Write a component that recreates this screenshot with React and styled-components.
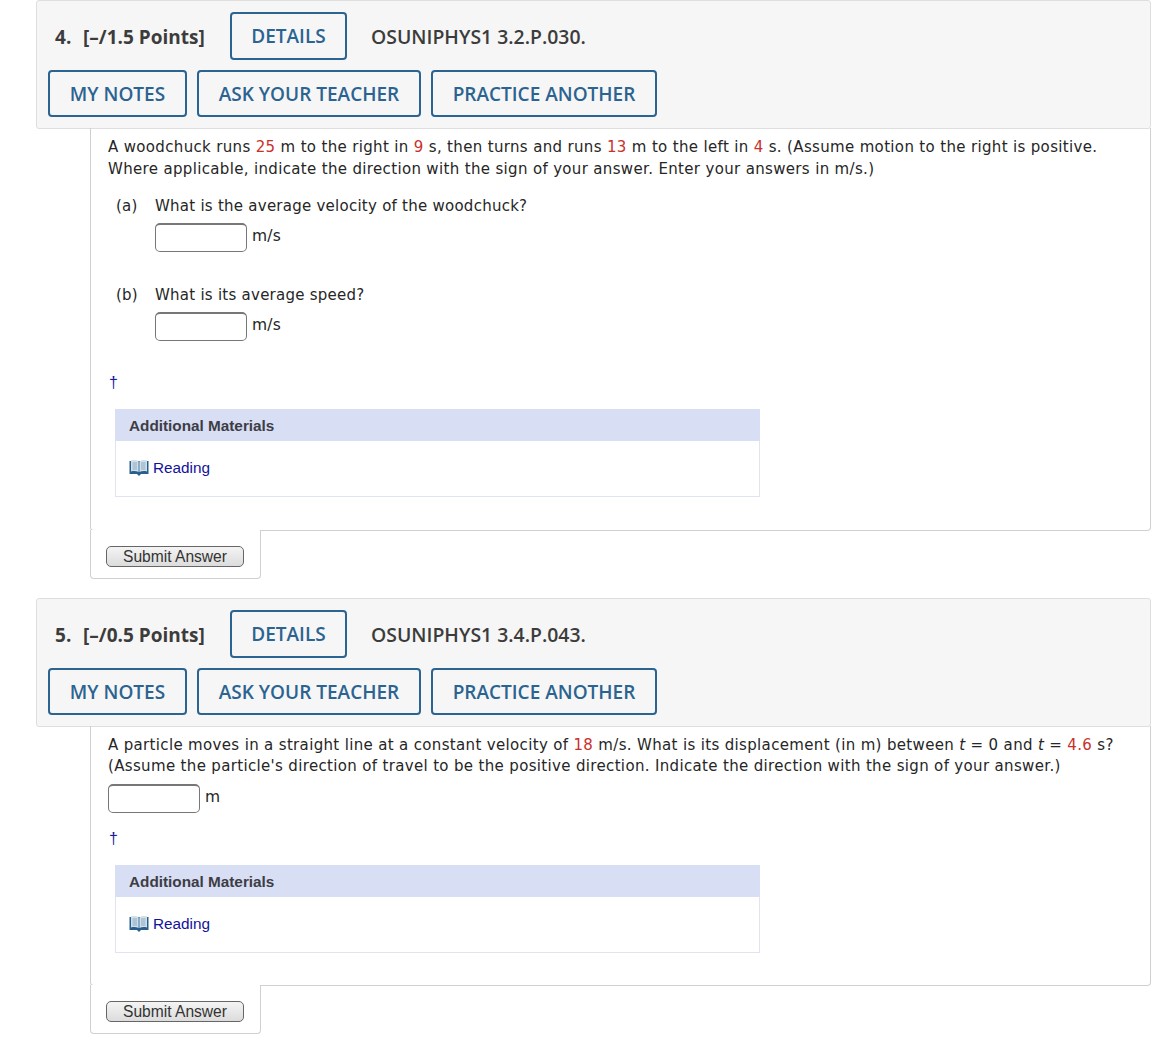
import React from 'react';
import styled, { createGlobalStyle } from 'styled-components';

const GlobalStyle = createGlobalStyle`
  html, body {
    margin: 0;
    padding: 0;
    background: #fff;
  }
`;

const Page = styled.div`
  width: 1170px;
  height: 1039px;
  padding-left: 36px;
  box-sizing: border-box;
  overflow: hidden;
`;

const Question = styled.section`
  width: 1115px;
  margin-bottom: ${(p) => p.$gap || 0}px;
`;

const Header = styled.header`
  height: 129px;
  box-sizing: border-box;
  background: #f6f6f6;
  border: 1px solid #dedede;
  border-radius: 3px;
  padding: 11px 0 0 11px;
`;

const HeaderRow = styled.div`
  display: flex;
  align-items: center;
  margin-bottom: 10px;
`;

const Points = styled.div`
  display: flex;
  width: 182px;
  padding: 2px 0 0 7px;
  box-sizing: border-box;
  font: 700 19px 'Open Sans', sans-serif;
  color: #3c3c3c;
`;

const Num = styled.span`
  width: 28px;
`;

const Code = styled.span`
  margin-left: 24px;
  font: 600 19.4px 'Open Sans', sans-serif;
  color: #3c3c3c;
`;

const HeadButton = styled.button`
  height: ${(p) => p.$h || 48}px;
  box-sizing: border-box;
  width: ${(p) => p.$w}px;
  margin-right: ${(p) => p.$mr || 0}px;
  padding: 0;
  background: transparent;
  border: 2px solid #2b6391;
  border-radius: 4px;
  color: #2b6391;
  font: 600 19px 'Open Sans', sans-serif;
`;

const Body = styled.div`
  margin-left: 54px;
  margin-top: -1px;
  height: ${(p) => p.$h}px;
  box-sizing: border-box;
  border: 1px solid #d0d0d0;
  border-top: 0;
  border-radius: 0 0 4px 4px;
  padding: 8px 0 0 17px;
  font: 15px/22px 'DejaVu Sans', Verdana, sans-serif;
  letter-spacing: 0.25px;
  color: #262626;
`;

const Red = styled.span`
  color: #c8312b;
`;

const Prompt = styled.p`
  margin: ${(p) => p.$top || 0}px 0 0;
  white-space: nowrap;
  letter-spacing: 0.34px;
  line-height: ${(p) => p.$lh || 22}px;
`;

const Part = styled.div`
  display: flex;
  margin: ${(p) => p.$top}px 0 0 8px;
`;

const PartLabel = styled.span`
  width: 39px;
`;

const AnswerRow = styled.div`
  display: flex;
  align-items: flex-start;
  margin: ${(p) => p.$top}px 0 0 ${(p) => p.$left}px;
`;

const AnswerBox = styled.input`
  width: 92px;
  height: 29px;
  box-sizing: border-box;
  margin: 0 5px 0 0;
  padding: 0;
  border: 1px solid #777;
  border-top-width: 2px;
  border-radius: 5px;
  background: #fff;
`;

const Unit = styled.span`
  font-size: 15.5px;
  line-height: 26px;
`;

const Dagger = styled.div`
  margin: ${(p) => p.$top}px 0 0 1px;
  color: #1a1a9c;
  font: 16px/20px 'Liberation Sans', Arial, sans-serif;
`;

const Materials = styled.div`
  width: 645px;
  height: 88px;
  box-sizing: border-box;
  margin: 16px 0 0 7px;
  border: 1px solid #dfe3f2;
  border-top: 0;
  letter-spacing: normal;
`;

const MaterialsTitle = styled.div`
  height: 32px;
  margin: 0 -1px;
  padding-left: 14px;
  background: #d8def3;
  font: 700 15.3px/33px 'Liberation Sans', Arial, sans-serif;
  color: #3d3d46;
`;

const ReadingLink = styled.a`
  display: flex;
  align-items: center;
  gap: 4px;
  margin: 17px 0 0 13px;
  font: 15.3px/20px 'Liberation Sans', Arial, sans-serif;
  color: #12129c;
`;

const SubmitTab = styled.div`
  position: relative;
  width: 171px;
  height: 49px;
  box-sizing: border-box;
  margin: -1px 0 0 54px;
  padding: 16px 0 0 15px;
  background: #fff;
  border: 1px solid #d0d0d0;
  border-top: 0;
  border-radius: 0 0 4px 4px;
`;

const SubmitButton = styled.button`
  display: block;
  width: 138px;
  height: 21px;
  box-sizing: border-box;
  padding: 0;
  border: 1px solid #666;
  border-radius: 5px;
  background: linear-gradient(#f4f4f4, #dcdcdc);
  color: #333;
  font: 15.6px 'Liberation Sans', Arial, sans-serif;
`;

const BookIcon = () => (
  <svg width="20" height="18" viewBox="0 0 20 18">
    <path d="M0.5 2h19v13H12l-2 2-2-2H0.5z" fill="#2a5f8c" />
    <path d="M2 1.5C5 .8 7.8 1 9.6 2.4V13C7.5 12 5 11.8 2 12.4z" fill="#cfe0ec" />
    <path d="M18 1.5C15 .8 12.2 1 10.4 2.4V13c2.1-1 4.6-1.2 7.6-.6z" fill="#cfe0ec" />
    <path d="M3.5 4h4.5M3.5 6h4.5M3.5 8h4.5M3.5 10h4.5M12 4h4.5M12 6h4.5M12 8h4.5M12 10h4.5" stroke="#8fa9bd" strokeWidth="1" />
  </svg>
);

function QuestionHeader({ num, points, code }) {
  return (
    <Header>
      <HeaderRow>
        <Points>
          <Num>{num}.</Num>
          <span>[–/{points} Points]</span>
        </Points>
        <HeadButton $w={117}>DETAILS</HeadButton>
        <Code>{code}</Code>
      </HeaderRow>
      <HeaderRow>
        <HeadButton $w={139} $h={47} $mr={10}>MY NOTES</HeadButton>
        <HeadButton $w={224} $h={47} $mr={10}>ASK YOUR TEACHER</HeadButton>
        <HeadButton $w={226} $h={47}>PRACTICE ANOTHER</HeadButton>
      </HeaderRow>
    </Header>
  );
}

function AdditionalMaterials() {
  return (
    <Materials>
      <MaterialsTitle>Additional Materials</MaterialsTitle>
      <ReadingLink>
        <BookIcon />
        Reading
      </ReadingLink>
    </Materials>
  );
}

function Submit() {
  return (
    <SubmitTab>
      <SubmitButton>Submit Answer</SubmitButton>
    </SubmitTab>
  );
}

export default function App() {
  return (
    <Page>
      <GlobalStyle />
      <Question $gap={19}>
        <QuestionHeader num={4} points="1.5" code="OSUNIPHYS1 3.2.P.030." />
        <Body $h={403}>
          <Prompt>
            A woodchuck runs <Red>25</Red> m to the right in <Red>9</Red> s, then turns and runs <Red>13</Red> m to the left in <Red>4</Red> s. (Assume motion to the right is positive.
            <br />
            Where applicable, indicate the direction with the sign of your answer. Enter your answers in m/s.)
          </Prompt>
          <Part $top={15}>
            <PartLabel>(a)</PartLabel>
            <span>What is the average velocity of the woodchuck?</span>
          </Part>
          <AnswerRow $top={6} $left={47}>
            <AnswerBox />
            <Unit>m/s</Unit>
          </AnswerRow>
          <Part $top={32}>
            <PartLabel>(b)</PartLabel>
            <span>What is its average speed?</span>
          </Part>
          <AnswerRow $top={6} $left={47}>
            <AnswerBox />
            <Unit>m/s</Unit>
          </AnswerRow>
          <Dagger $top={32}>†</Dagger>
          <AdditionalMaterials />
        </Body>
        <Submit />
      </Question>
      <Question>
        <QuestionHeader num={5} points="0.5" code="OSUNIPHYS1 3.4.P.043." />
        <Body $h={260}>
          <Prompt $lh={21} $top={1}>
            A particle moves in a straight line at a constant velocity of <Red>18</Red> m/s. What is its displacement (in m) between <i>t</i> = 0 and <i>t</i> = <Red>4.6</Red> s?
            <br />
            (Assume the particle's direction of travel to be the positive direction. Indicate the direction with the sign of your answer.)
          </Prompt>
          <AnswerRow $top={7} $left={0}>
            <AnswerBox />
            <Unit>m</Unit>
          </AnswerRow>
          <Dagger $top={16}>†</Dagger>
          <AdditionalMaterials />
        </Body>
        <Submit />
      </Question>
    </Page>
  );
}
